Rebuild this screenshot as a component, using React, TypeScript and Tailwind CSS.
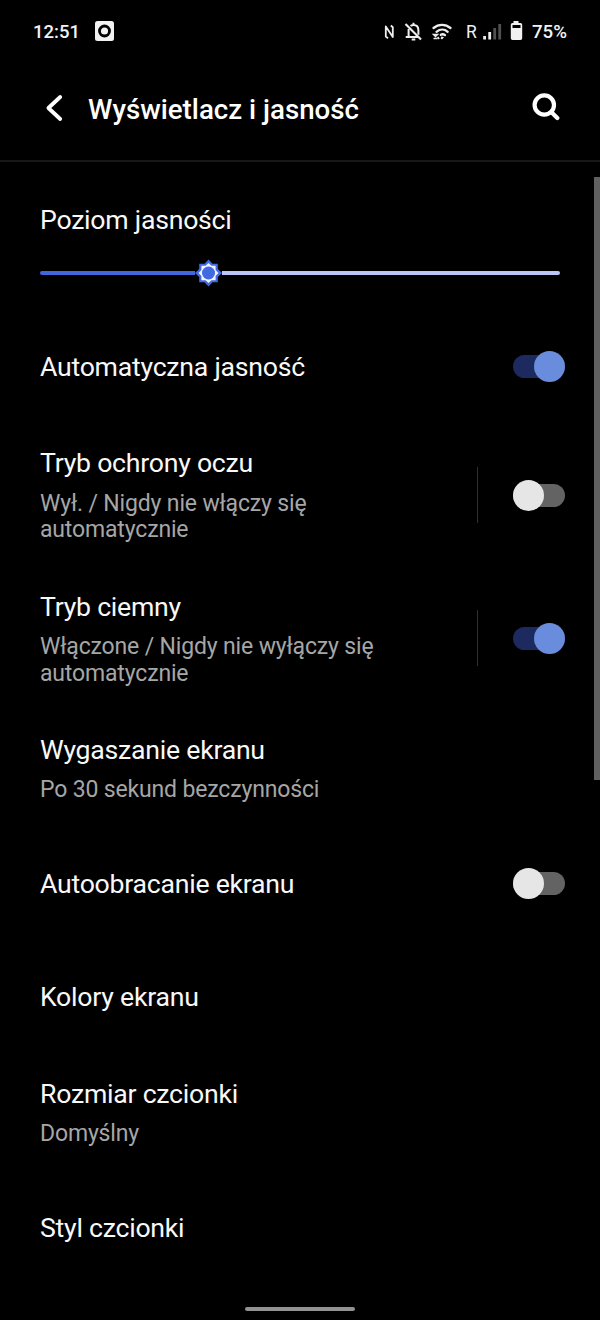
import type { ReactNode } from 'react';

function Toggle({ on }: { on: boolean }) {
  return (
    <button
      role="switch"
      aria-checked={on}
      className={`flex h-[23px] w-[52px] shrink-0 items-center rounded-full ${on ? 'justify-end bg-[#1d2a60]' : 'justify-start bg-[#636363]'}`}
    >
      <span className={`size-[31px] shrink-0 rounded-full ${on ? 'bg-[#698cdc]' : 'bg-[#e6e6e6]'}`} />
    </button>
  );
}

type RowProps = { title: string; sub?: ReactNode; height: string; toggle?: boolean; divided?: boolean };

function Row({ title, sub, height, toggle, divided }: RowProps) {
  return (
    <div className={`flex shrink-0 items-center justify-between pr-[35px] pl-10 ${height}`}>
      <div className={sub ? 'pt-0.5' : 'pt-[1.5px]'}>
        <div className="text-[26.67px] leading-[31px] tracking-[-0.25px] whitespace-nowrap text-[#f8f8f8]">{title}</div>
        {sub && <div className="mt-[11.2px] text-[23px] leading-[26.67px] tracking-[-0.16px] whitespace-nowrap text-[#a6a6a6]">{sub}</div>}
      </div>
      {toggle !== undefined && (
        <div className="flex items-center gap-[35px]">
          {divided && <span className="h-[56px] w-px bg-[#303030]" />}
          <Toggle on={toggle} />
        </div>
      )}
    </div>
  );
}

function StatusBar() {
  return (
    <div className="flex h-[63px] shrink-0 items-center pr-[33px] pl-[33px] text-[18.7px] font-medium text-[#f2f2f2]">
      <span className="pt-0.5 text-[18.5px] leading-none">12:51</span>
      <svg className="mb-px ml-[15px]" width="19" height="20" viewBox="0 0 19 20">
        <rect width="19" height="20" rx="2.5" fill="#f2f2f2" />
        <circle cx="9.5" cy="10" r="5" fill="none" stroke="#000" strokeWidth="2.8" />
      </svg>
      <svg className="ml-auto" width="70" height="22" viewBox="384 21 70 22" fill="none" stroke="#eee">
        <path d="M388 38.200l-2.200-1.700V26.500l7 10.500V27.200l-2-1.700" strokeWidth="1.800" strokeLinejoin="round" />
        <path d="M405.500 24l15.500 15.500" strokeWidth="2.100" />
        <path d="M410.500 26c1-.7 1.900-1 3-1 3.200 0 4.900 2.300 4.900 5.300v4.500M408.600 29v7.500M405.700 37h12.500M411.700 39.500h3.600M413.500 22.800v2" strokeWidth="2" />
        <path d="M433.500 28c5-4.200 12-4.200 17 0M436.500 31.800c3.500-2.900 8-2.900 11.200 0M440.800 34.800c1.500-.9 2.700-.8 4.200.3" strokeWidth="2.300" strokeLinecap="round" />
        <path d="M441.500 36.500l2.500.8-2 2.200-1.500-1.200z" fill="#eee" stroke="none" />
        <path d="M433.500 34.500l2 2 2-2zM433.500 38.500h4M437.700 37l1.500 2" strokeWidth="1.500" />
      </svg>
      <span className="ml-3 w-4 pt-[2px] text-[17.5px] leading-none font-normal">R</span>
      <svg className="-mr-px ml-px" width="19" height="18" viewBox="0 0 19 18" fill="none" strokeWidth="2.8">
        <path d="M1.600 13v3.500M6.700 9v7.500" stroke="#eee" />
        <path d="M11.700 5v11.500M16.700 1v15.500" stroke="#505050" />
      </svg>
      <svg className="mb-px ml-[9px]" width="13" height="20" viewBox="0 0 13 20">
        <path d="M3.500 0h5v2h2q1.700 0 1.700 1.700v13.500q0 1.800-1.700 1.800h-8Q.8 19 .8 17.200V3.700Q.8 2 2.500 2h1z" fill="#f2f2f2" />
        <path d="M2.500 4h8v3h-8z" fill="#000" />
      </svg>
      <span className="ml-[9px] pt-0.5 leading-none">75%</span>
    </div>
  );
}

export default function App() {
  return (
    <main className="relative flex h-[1320px] w-[600px] flex-col overflow-hidden bg-black font-[Roboto,sans-serif]">
      <StatusBar />
      <header className="flex h-[99px] shrink-0 items-center border-b-2 border-[#171717] pr-10 pb-[6px] pl-[45px]">
        <svg className="mt-[-2px]" width="18" height="28" viewBox="0 0 18 28" fill="none" stroke="#fff" strokeWidth="3.8" strokeLinecap="round" strokeLinejoin="round">
          <path d="M15.200 3 3.400 14l11.800 11" />
        </svg>
        <h1 className="mt-[2px] ml-[25px] text-[27.7px] leading-8 font-medium whitespace-nowrap text-white">Wyświetlacz i jasność</h1>
        <svg className="mt-[-3px] ml-auto" width="28" height="28" viewBox="0 0 28 28" fill="none" stroke="#fff" strokeWidth="4.2">
          <circle cx="12.300" cy="12" r="9.700" />
          <path d="M19.500 19.300l5.800 5.700" strokeLinecap="round" />
        </svg>
      </header>
      <section className="h-[148.15px] shrink-0 px-10 pt-[43px]">
        <h2 className="text-[26.67px] leading-[31px] tracking-[-0.25px] text-[#f8f8f8]">Poziom jasności</h2>
        <div className="mt-[23px] flex h-7 items-center">
          <div className="h-[4px] w-[155px] rounded-l bg-[#4366dc]" />
          <svg width="27" height="28" viewBox="-13.500 -14 27 28">
            <path d="M0-13.500 4-9.300H9.300V-4L13.500 0 9.300 4V9.300H4L0 13.500-4 9.300H-9.300V4L-13.500 0-9.300-4V-9.300H-4z" fill="#4169e1" />
            <path d="M0-10 3-7.200H7.100V-3L10 0 7.100 3V7.200H3L0 10-3 7.200H-7.100V3L-10 0-7.100-3V-7.200H-3z" fill="#f0f4ff" />
            <circle r="6.500" fill="#4169e1" />
          </svg>
          <div className="h-[4px] flex-1 rounded-r bg-[#bcc6f4]" />
        </div>
      </section>
      <Row title="Automatyczna jasność" height="h-[113.33px]" toggle />
      <Row title="Tryb ochrony oczu" sub={<>Wył. / Nigdy nie włączy się<br />automatycznie</>} height="h-[143.33px]" toggle={false} divided />
      <Row title="Tryb ciemny" sub={<>Włączone / Nigdy nie wyłączy się<br />automatycznie</>} height="h-[143.33px]" toggle divided />
      <Row title="Wygaszanie ekranu" sub="Po 30 sekund bezczynności" height="h-[117px]" />
      <Row title="Autoobracanie ekranu" height="h-[113.33px]" toggle={false} />
      <Row title="Kolory ekranu" height="h-[113.33px]" />
      <Row title="Rozmiar czcionki" sub="Domyślny" height="h-[117px]" />
      <Row title="Styl czcionki" height="h-[113.33px]" />
      <div className="absolute top-[177px] right-0 h-[603px] w-[6px] bg-[#606060]" />
      <div className="absolute bottom-[9px] left-[245px] h-[4px] w-[110px] rounded-full bg-[#929292]" />
    </main>
  );
}
